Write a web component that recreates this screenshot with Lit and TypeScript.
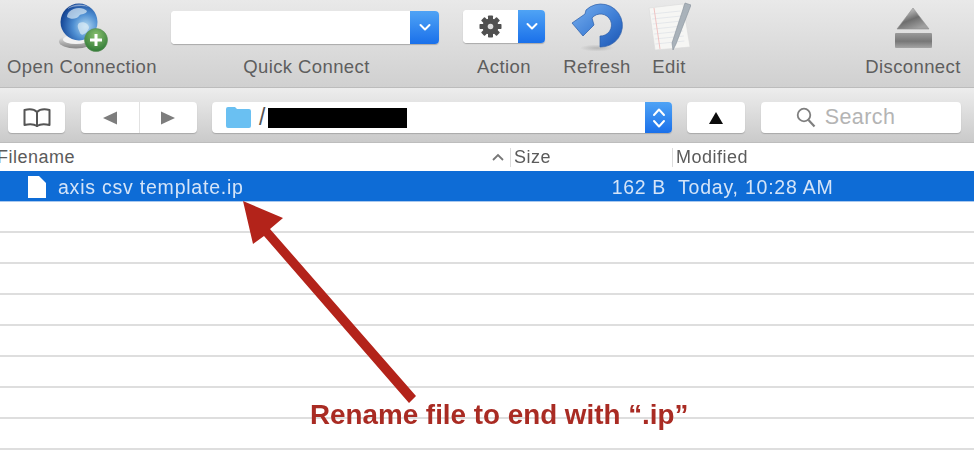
import { LitElement, html, css, svg } from "lit";
import { customElement } from "lit/decorators.js";

const chevron = svg`<svg width="14" height="9" viewBox="0 0 14 9"><path d="M2.5 2 L7 6.5 L11.5 2" fill="none" stroke="#fff" stroke-width="2" stroke-linecap="round" stroke-linejoin="round"/></svg>`;

@customElement("app-root")
export class AppRoot extends LitElement {
  static styles = css`
    :host { display: block; width: 974px; height: 454px; overflow: hidden; position: relative; background: #fff;
      font-family: "Liberation Sans", Arial, sans-serif; }
    .soft { filter: blur(0.6px); width: 974px; height: 454px; position: relative; overflow: hidden; }
    .toolbar { height: 88px; box-sizing: border-box; background: linear-gradient(#e9e9e9, #d0d0d0); border-bottom: 1px solid #bcbcbc;
      display: flex; padding-left: 7px; }
    .tool { display: flex; flex-direction: column; align-items: center; height: 87px; flex: none; }
    .tool .ic { height: 56px; display: flex; align-items: flex-start; justify-content: center; flex: none; }
    .tool .lb { font-size: 18.5px; line-height: 22px; color: #5e5e5e; letter-spacing: 0.4px; white-space: nowrap; }
    .t-open { width: 150px; margin-right: 14px; }
    .t-quick { width: 268px; margin-right: 24px; }
    .t-quick .lb { padding-left: 3px; }
    .t-action { width: 82px; margin-right: 19px; }
    .t-refresh { width: 66px; margin-right: 22px; }
    .t-edit { width: 34px; margin-right: 179px; }
    .t-disc { width: 96px; }
    .t-disc .ic { padding-top: 8px; height: 48px; }
    .combo { display: flex; margin-top: 11px; height: 33px; border-radius: 4px; overflow: hidden; box-shadow: 0 1px 1px #a9a9a9; background: #fff; }
    .combo .field { flex: 1; background: #fff; }
    .combo .blue { background: linear-gradient(#4fa3f5, #1a70ea); display: flex; align-items: center; justify-content: center; }
    .quick { width: 268px; }
    .quick .blue { width: 29px; }
    .act { width: 82px; margin-top: 10px; }
    .act .field { display: flex; align-items: center; justify-content: center; }
    .act .blue { width: 27px; }
    .pathbar { height: 55px; box-sizing: border-box; background: linear-gradient(#ededed, #cacaca); display: flex; align-items: flex-start; padding: 14px 0 0 8px; border-bottom: 1px solid #bdbdbd; }
    .btn { height: 31px; background: #fff; border-radius: 4px; box-shadow: 0 1px 1px #a8a8a8; display: flex; align-items: center; justify-content: center; box-sizing: border-box; flex: none; }
    .book { width: 57px; margin-right: 16px; }
    .nav { width: 116px; margin-right: 15px; }
    .nav span { flex: 1; height: 100%; display: flex; align-items: center; justify-content: center; }
    .nav span + span { border-left: 1px solid #e2e2e2; }
    .path { width: 460px; margin-right: 15px; justify-content: flex-start; overflow: hidden; padding-left: 14px; }
    .path .slash { font-size: 23px; color: #555; margin: 0 3px 0 8px; }
    .path .mask { width: 139px; height: 20px; background: #000; }
    .path .step { margin-left: auto; width: 27px; height: 100%; background: linear-gradient(#4fa3f5, #1a70ea); display: flex; align-items: center; justify-content: center; }
    .up { width: 58px; margin-right: 16px; }
    .search { width: 200px; color: #b4b4b4; font-size: 21.5px; letter-spacing: 0.4px; gap: 9px; padding-right: 31px; }
    .cols { display: grid; grid-template-columns: 510px 162px 1fr; }
    .head { height: 28px; background: #fff; align-items: center; font-size: 18px; color: #5b5b5b; letter-spacing: 0.5px; }
    .head > div { height: 19px; line-height: 19px; display: flex; align-items: center; box-sizing: border-box; }
    .head .name { margin-left: -3px; justify-content: space-between; padding-right: 5px; }
    .head .sz, .head .mod { border-left: 1px solid #dcdcdc; padding-left: 3px; }
    .sel { height: 30px; background: #0e6cd6; color: #d4e4f8; font-size: 19.5px; align-items: center; letter-spacing: 0.78px; box-shadow: 0 1px 0 #a9c8ee; }
    .sel > div { padding-top: 2px; }
    .sel .name { display: flex; align-items: center; padding-left: 28px; gap: 12px; }
    .sel .sz { text-align: right; padding-right: 6px; letter-spacing: 0.65px; }
    .sel .mod { padding-left: 6px; }
    .rows { padding-top: 1px; }
    .row { height: 31px; box-sizing: border-box; border-bottom: 2px solid #dedede; }
    .arrow { position: absolute; left: 0; top: 0; pointer-events: none; }
    .note { position: absolute; left: 310px; top: 400px; font-size: 27.8px; line-height: 30px; font-weight: 700; color: #a92b23; white-space: nowrap; }
  `;

  private globe() {
    return svg`<svg width="56" height="54" viewBox="0 0 56 54">
      <defs>
        <radialGradient id="gl" cx="0.68" cy="0.62" r="0.75"><stop offset="0" stop-color="#b4daf2"/><stop offset="0.45" stop-color="#4f8fd2"/><stop offset="0.85" stop-color="#1c4f9e"/><stop offset="1" stop-color="#123a80"/></radialGradient>
        <linearGradient id="pl" x1="0" y1="0" x2="0" y2="1"><stop offset="0" stop-color="#f0f0f0"/><stop offset="1" stop-color="#858585"/></linearGradient>
        <radialGradient id="gr" cx="0.5" cy="0.3" r="0.8"><stop offset="0" stop-color="#8ac06f"/><stop offset="1" stop-color="#23702e"/></radialGradient>
      </defs>
      <ellipse cx="22" cy="41.5" rx="17" ry="7" fill="url(#pl)"/>
      <ellipse cx="22" cy="39.5" rx="13" ry="4.5" fill="#f2f2f2"/>
      <circle cx="25" cy="22" r="18.5" fill="url(#gl)"/>
      <path d="M15 12 C20 7 29 7 33 11 C32 15 27 13 25 16 C23 19 17 20 13 17 C13 15 14 13 15 12Z M25 23 C30 21 35 24 35 28 C33 33 28 37 26 33 C25 30 22 26 25 23Z" fill="#dcebf5" opacity="0.7"/>
      <path d="M13 9 C18 4 28 3 35 7 C28 5 19 6 13 9Z" fill="#fff" opacity="0.45"/>
      <circle cx="42" cy="40" r="11.5" fill="url(#gr)" stroke="#5c8d57" stroke-width="0.6"/>
      <path d="M42 34 V46 M36 40 H48" stroke="#fff" stroke-width="3"/>
    </svg>`;
  }
  private gear() {
    const teeth = [0, 45, 90, 135].map(
      (a) => svg`<rect x="9" y="0.5" width="5" height="22" rx="0.8" fill="#505050" transform="rotate(${a} 11.5 11.5)"/>`
    );
    return svg`<svg width="23" height="23" viewBox="0 0 23 23">${teeth}<circle cx="11.5" cy="11.5" r="8" fill="#505050"/><circle cx="11.5" cy="11.5" r="2.8" fill="#ddd"/></svg>`;
  }
  private refresh() {
    return svg`<svg width="52" height="52" viewBox="0 0 52 52">
      <defs><linearGradient id="rf" x1="0" y1="0" x2="1" y2="1"><stop offset="0" stop-color="#79b0ee"/><stop offset="0.55" stop-color="#3f7fd6"/><stop offset="1" stop-color="#1c55b2"/></linearGradient>
      <radialGradient id="sh"><stop offset="0" stop-color="#999" stop-opacity="0.55"/><stop offset="1" stop-color="#999" stop-opacity="0"/></radialGradient></defs>
      <ellipse cx="26" cy="48" rx="17" ry="3.5" fill="url(#sh)"/>
      <path d="M1 23 L14 14 L15 10 A21.5 21.5 0 1 1 29 47 L29 36 A11 11 0 1 0 21 18 L23 25 L12 36Z" fill="url(#rf)" stroke="#2a5ca8" stroke-width="0.7" stroke-linejoin="round"/>
    </svg>`;
  }
  private edit() {
    const lines = [14, 19, 24, 29, 34, 39, 44].map(
      (y) => svg`<path d="M${4 + (y - 10) * 0.13} ${y} L${33 + (y - 10) * 0.13} ${y - 3}" stroke="#dfe3e8" stroke-width="0.8"/>`
    );
    return svg`<svg width="44" height="52" viewBox="0 0 44 52">
      <path d="M2 8 L36 4 L43 47 L8 50Z" fill="#f6f6f4" stroke="#dadada" stroke-width="0.6"/>
      ${lines}
      <path d="M7 8 L13 49" stroke="#eebcbc" stroke-width="0.9"/>
      <path d="M38 3 L44 5 L29 44 L26 50 L25 43Z" fill="#a9b2ba" stroke="#87919a" stroke-width="0.6"/>
    </svg>`;
  }
  private eject() {
    return svg`<svg width="40" height="42" viewBox="0 0 40 42">
      <defs><linearGradient id="ej" x1="0" y1="0" x2="0.6" y2="1"><stop offset="0" stop-color="#efefef"/><stop offset="0.6" stop-color="#6e6e6e"/><stop offset="1" stop-color="#a0a0a0"/></linearGradient>
      <linearGradient id="ej2" x1="0" y1="0" x2="0" y2="1"><stop offset="0" stop-color="#9a9a9a"/><stop offset="0.55" stop-color="#777"/><stop offset="1" stop-color="#a5a5a5"/></linearGradient></defs>
      <path d="M20 0 L36 21 H4Z" fill="url(#ej)" stroke="#8f8f8f" stroke-width="0.6"/>
      <rect x="2" y="25" width="37" height="15" rx="1" fill="url(#ej2)"/>
    </svg>`;
  }

  render() {
    return html`<div class="soft">
      <div class="toolbar">
        <div class="tool t-open"><div class="ic">${this.globe()}</div><div class="lb">Open Connection</div></div>
        <div class="tool t-quick"><div class="ic"><div class="combo quick"><div class="field"></div><div class="blue">${chevron}</div></div></div><div class="lb">Quick Connect</div></div>
        <div class="tool t-action"><div class="ic"><div class="combo act"><div class="field">${this.gear()}</div><div class="blue">${chevron}</div></div></div><div class="lb">Action</div></div>
        <div class="tool t-refresh"><div class="ic">${this.refresh()}</div><div class="lb">Refresh</div></div>
        <div class="tool t-edit"><div class="ic">${this.edit()}</div><div class="lb">Edit</div></div>
        <div class="tool t-disc"><div class="ic">${this.eject()}</div><div class="lb">Disconnect</div></div>
      </div>
      <div class="pathbar">
        <div class="btn book"><svg width="30" height="22" viewBox="0 0 30 22"><path d="M15 5 C12 2 7 2 2.5 3 V18 C7 17 12 17 15 19 C18 17 23 17 27.5 18 V3 C23 2 18 2 15 5Z M15 5 V20" fill="none" stroke="#555" stroke-width="2" stroke-linejoin="round"/></svg></div>
        <div class="btn nav">
          <span><svg width="16" height="14" viewBox="0 0 16 14"><path d="M1 7 L15 0.5 V13.5Z" fill="#7d7d7d"/></svg></span>
          <span><svg width="16" height="14" viewBox="0 0 16 14"><path d="M15 7 L1 0.5 V13.5Z" fill="#7d7d7d"/></svg></span>
        </div>
        <div class="btn path">
          <svg width="25" height="21" viewBox="0 0 25 21"><path d="M0 2 Q0 0 2 0 H9 L11 2 H23 Q25 2 25 4 V19 Q25 21 23 21 H2 Q0 21 0 19Z" fill="#6ac0f2"/></svg>
          <span class="slash">/</span><span class="mask"></span>
          <span class="step"><svg width="16" height="24" viewBox="0 0 16 24"><path d="M3 9 L8 3.5 L13 9 M3 15 L8 20.5 L13 15" fill="none" stroke="#fff" stroke-width="2" stroke-linecap="round" stroke-linejoin="round"/></svg></span>
        </div>
        <div class="btn up"><svg width="14" height="12" viewBox="0 0 14 12"><path d="M7 0 L14 12 H0Z" fill="#0c0c0c"/></svg></div>
        <div class="btn search"><svg width="20" height="21" viewBox="0 0 20 21"><circle cx="8" cy="8" r="6.3" fill="none" stroke="#7f7f7f" stroke-width="1.8"/><path d="M12.5 13 L18.5 19.5" stroke="#7f7f7f" stroke-width="2.2"/></svg><span>Search</span></div>
      </div>
      <div class="cols head">
        <div class="name"><span>Filename</span><svg width="14" height="8" viewBox="0 0 14 8"><path d="M2 7 L7 2 L12 7" fill="none" stroke="#777" stroke-width="1.8"/></svg></div>
        <div class="sz">Size</div>
        <div class="mod">Modified</div>
      </div>
      <div class="cols sel">
        <div class="name"><svg width="18" height="22" viewBox="0 0 18 22"><path d="M0 0 H11 L18 7 V22 H0Z" fill="#fff"/></svg><span>axis csv template.ip</span></div>
        <div class="sz">162 B</div>
        <div class="mod">Today, 10:28 AM</div>
      </div>
      <div class="rows">${[0, 1, 2, 3, 4, 5, 6, 7].map(() => html`<div class="row"></div>`)}</div>
      <svg class="arrow" width="974" height="454" viewBox="0 0 974 454">
        <path d="M243 201 L283 218 L270 229 L416 396 L409 403 L264 236 L253 244Z" fill="#b3231a"/>
      </svg>
      <div class="note">Rename file to end with “.ip”</div>
    </div>`;
  }
}
